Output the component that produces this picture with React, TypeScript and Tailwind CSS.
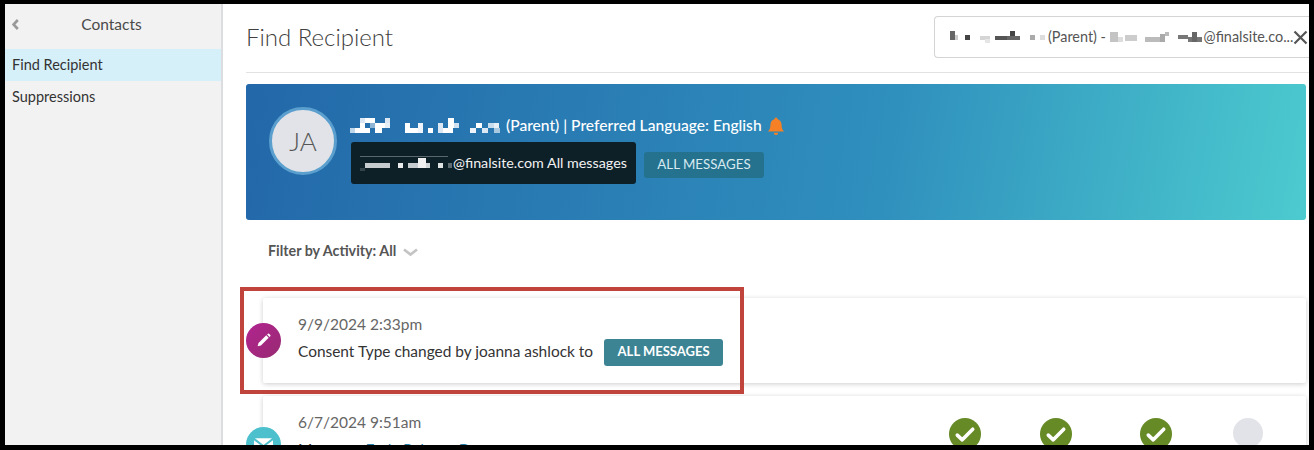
import React from "react";

const font = { fontFamily: "Lato, sans-serif" };

type Cell = [number, number, number, number, string];

function Mosaic({ w, h, cells, className = "" }: { w: number; h: number; cells: Cell[]; className?: string }) {
  return (
    <svg width={w} height={h} viewBox={`0 0 ${w} ${h}`} className={`inline-block shrink-0 blur-[0.5px] ${className}`} aria-hidden="true">
      {cells.map((c, i) => (
        <rect key={i} x={c[0]} y={c[1]} width={c[2]} height={c[3]} fill={c[4]} />
      ))}
    </svg>
  );
}

const nameCells: Cell[] = [
  [0, 11, 5, 5, "#bcd6ea"], [5, 11, 5, 5, "#fff"], [10, 1, 5, 5, "#dbe8f3"], [10, 6, 5, 10, "#fff"], [15, 1, 10, 5, "#fff"], [15, 11, 5, 5, "#fff"], [20, 6, 5, 5, "#8fb6d6"], [25, 6, 10, 5, "#fff"], [25, 11, 7, 5, "#fff"], [35, 1, 5, 5, "#dbe8f3"], [35, 6, 5, 5, "#e8f0f7"],
  [55, 6, 5, 10, "#fff"], [60, 11, 8, 5, "#fff"], [68, 6, 5, 10, "#eef4f9"], [78, 11, 5, 5, "#fff"], [88, 6, 5, 10, "#dbe8f3"], [93, 11, 10, 5, "#fff"], [98, 1, 6, 10, "#fff"], [104, 6, 5, 5, "#cfe0ee"],
  [120, 11, 6, 5, "#eef4f9"], [126, 6, 6, 5, "#fff"], [132, 11, 6, 5, "#dbe8f3"], [138, 6, 6, 5, "#c7dcec"], [144, 11, 6, 5, "#a9c9e1"], [144, 6, 5, 5, "#e8f0f7"],
];

const emailCells: Cell[] = [
  [0, 0, 88, 1, "#5a686e"], [0, 12, 5, 3, "#33434a"], [5, 7, 25, 5, "#c5cbce"], [38, 7, 5, 5, "#e8eaeb"], [48, 7, 10, 5, "#c5cbce"], [58, 2, 8, 10, "#f0f0f0"], [66, 7, 4, 5, "#cfd4d6"], [78, 7, 5, 5, "#dfe2e3"], [88, 7, 4, 5, "#5d6a70"],
];

const searchNameCells: Cell[] = [
  [0, 0, 5, 9, "#666"], [5, 4, 3, 5, "#ccc"], [15, 4, 5, 5, "#444"], [30, 5, 10, 4, "#d5d5d5"], [35, 8, 5, 4, "#e5e5e5"], [45, 5, 12, 4, "#555"], [60, 0, 5, 9, "#444"], [57, 5, 13, 4, "#666"], [80, 4, 5, 5, "#aaa"], [90, 4, 5, 5, "#ddd"],
];

const searchEmailCells: Cell[] = [
  [0, 1, 8, 10, "#c4c4c4"], [8, 6, 5, 5, "#ddd"], [15, 4, 12, 6, "#ccc"], [35, 6, 15, 5, "#bbb"], [50, 3, 5, 8, "#aaa"], [55, 1, 4, 4, "#bbb"], [68, 4, 10, 4, "#777"], [78, 6, 14, 5, "#777"], [82, 1, 5, 10, "#666"],
];

function PencilIcon() {
  return (
    <svg width="17" height="17" viewBox="0 0 16 16" fill="#fff" aria-hidden="true">
      <path d="M10.600 3.100l2.300 2.300-7.300 7.300-3.100.8.8-3.100z" />
      <path d="M11.400 2.300l.7-.7a.8.8 0 0 1 1.100 0l1.200 1.200a.8.8 0 0 1 0 1.100l-.7.7z" />
    </svg>
  );
}

function CheckCircle() {
  return (
    <div className="flex h-[32px] w-[32px] items-center justify-center rounded-full bg-[#668a26]">
      <svg width="24" height="19" viewBox="0 0 20 16" fill="none" stroke="#fff" strokeWidth="3" strokeLinecap="round" strokeLinejoin="round" aria-hidden="true">
        <path d="M3.500 8.500l4.200 4L16.500 3.500" />
      </svg>
    </div>
  );
}

export default function App() {
  return (
    <div className="h-[450px] w-[1314px] overflow-hidden bg-black pl-[5px] pt-[4px]" style={font}>
      <div className="flex h-[441px] w-[1304px] overflow-hidden bg-white text-[#333]">
        {/* Sidebar */}
        <aside className="h-full w-[218px] shrink-0 border-r-2 border-[#dcdde0] bg-[#f2f2f2]">
          <div className="relative flex h-[45px] items-center justify-center pb-[4px] pr-[3px] text-[15.500px] text-[#4a4a4a]">
            <svg className="absolute left-[7px] top-[15px]" width="7" height="11" viewBox="0 0 7 11" fill="none" stroke="#999" strokeWidth="2.600" aria-hidden="true">
              <path d="M5.800 1L1.600 5.500l4.200 4.500" />
            </svg>
            <span>Contacts</span>
          </div>
          <div className="flex h-[32px] items-center bg-[#d6f0fa] pl-[7px] text-[14.500px] text-[#333]">Find Recipient</div>
          <div className="flex h-[32px] items-center pl-[7px] text-[14.500px] text-[#333]">Suppressions</div>
        </aside>

        {/* Main */}
        <main className="relative min-w-0 flex-1 pl-[23px]">
          <header className="flex h-[69px] items-start justify-between border-b border-[#e2e2e2]">
            <h1 className="mt-[17px] text-[24px] font-light leading-[32px] text-[#404040]">Find Recipient</h1>
            <div className="mt-[12px] flex h-[42px] w-[375px] items-center whitespace-nowrap rounded-l-[4px] border border-r-0 border-[#d4d4d4] bg-white pl-[15px] text-[14.400px] text-[#555]">
              <Mosaic w={98} h={12} cells={searchNameCells} />
              <span>(Parent) -&nbsp;</span>
              <Mosaic w={94} h={12} cells={searchEmailCells} />
              <span>@finalsite.co...</span>
              <svg className="shrink-0" width="15" height="15" viewBox="0 0 15 15" fill="none" stroke="#555" strokeWidth="2.200" aria-hidden="true">
                <path d="M1.500 1.500l12 12M13.500 1.500l-12 12" />
              </svg>
            </div>
          </header>

          {/* Banner */}
          <section className="mr-[3px] mt-[11px] flex h-[136px] items-start rounded-[3px] bg-[linear-gradient(100deg,#2368a9_0%,#2f8fbd_60%,#4ccbcf_100%)] pl-[23px] pt-[23px]">
            <div className="flex h-[68px] w-[68px] shrink-0 items-center justify-center rounded-full border-[3px] border-[#5b9fce] bg-[#e1e3e8] text-[26px] font-light text-[#555]">JA</div>
            <div className="ml-[14px] mt-[7px] min-w-0">
              <div className="flex h-[24px] items-center whitespace-nowrap text-[15.600px] text-white" style={{ fontWeight: 500 }}>
                <Mosaic w={155} h={18} cells={nameCells} className="-ml-[1px] mr-[1px]" />
                <span>(Parent) | Preferred Language: English</span>
                <svg className="ml-[5px]" width="18" height="19" viewBox="0 0 16 17" fill="#f58025" aria-hidden="true">
                  <path d="M8 .5a1.400 1.400 0 0 1 1.400 1.500C11.700 2.600 13 4.600 13 7c0 3 .7 4.400 2.200 6H.8C2.300 11.400 3 10 3 7c0-2.400 1.300-4.400 3.600-5A1.400 1.400 0 0 1 8 .5z" />
                  <path d="M6 14h4a2 2 0 0 1-4 0z" />
                </svg>
              </div>
              <div className="mt-[4px] flex items-center">
                <div className="flex h-[42px] w-[285px] items-center whitespace-nowrap rounded-[3px] bg-[#0d1f27] pl-[9px] text-[14.300px] text-[#f2f2f2]">
                  <Mosaic w={93} h={15} cells={emailCells} />
                  <span>@finalsite.com All messages</span>
                </div>
                <div className="ml-[8px] mt-[4px] flex h-[26px] w-[120px] items-center justify-center rounded-[3px] bg-[#25728f] text-[13.300px] text-[#d8eaf0]">ALL MESSAGES</div>
              </div>
            </div>
          </section>

          {/* Filter */}
          <div className="ml-[22px] mt-[21px] flex h-[20px] items-center text-[14.300px] font-bold text-[#555]">
            <span>Filter by Activity: All</span>
            <svg className="ml-[7px] mt-[2px]" width="15" height="9" viewBox="0 0 15 9" fill="none" stroke="#c4c4c4" strokeWidth="2.800" aria-hidden="true">
              <path d="M1 1.500l6.500 5 6.500-5" />
            </svg>
          </div>

          {/* Timeline */}
          <div className="relative ml-[17px] mr-[3px] mt-[37px]">
            <article className="relative flex h-[85px] flex-col justify-center rounded-[2px] bg-white pb-[2px] pl-[35px] shadow-[0_1px_5px_rgba(0,0,0,0.2)]">
              <div className="absolute -left-[17px] top-[25px] flex h-[35px] w-[35px] items-center justify-center rounded-full bg-[linear-gradient(135deg,#b2248f,#972a72)]">
                <PencilIcon />
              </div>
              <div className="text-[15.500px] leading-[20px] text-[#666]">9/9/2024 2:33pm</div>
              <div className="mt-[5px] flex items-center text-[15.450px] text-[#333]">
                <span>Consent Type changed by joanna ashlock to</span>
                <span className="ml-[11px] flex h-[27px] w-[119px] items-center justify-center rounded-[3px] bg-[#3c8494] text-[13px] font-bold text-white">ALL MESSAGES</span>
              </div>
            </article>

            <article className="relative mt-[13px] h-[85px] rounded-[2px] bg-white pl-[35px] pt-[16px] shadow-[0_1px_5px_rgba(0,0,0,0.2)]">
              <div className="absolute -left-[17px] top-[31px] flex h-[35px] w-[35px] items-start justify-center rounded-full bg-[#4cc0cd] pt-[11px]">
                <svg width="19" height="14" viewBox="0 0 20 14" fill="#fff" aria-hidden="true">
                  <path d="M1 0h18l-9 7z" />
                  <path d="M0 2l10 7.500L20 2v12H0z" />
                </svg>
              </div>
              <div className="text-[15.500px] leading-[20px] text-[#666]">6/7/2024 9:51am</div>
              <div className="mt-[6px] text-[15.500px] text-[#333]">
                Message: <span className="text-[#2a7fa8]">Early Release Day</span>
              </div>
              <div className="absolute left-[686px] top-[22px] flex">
                <CheckCircle />
                <div className="ml-[59px]"><CheckCircle /></div>
                <div className="ml-[68px]"><CheckCircle /></div>
                <div className="ml-[61px] h-[30px] w-[30px] rounded-full bg-[#e1e3e8]" />
              </div>
            </article>
          </div>

          {/* Annotation */}
          <div className="pointer-events-none absolute left-[17px] top-[283px] h-[107px] w-[504px] border-[4px] border-[#c0433c]" />
        </main>
      </div>
    </div>
  );
}
